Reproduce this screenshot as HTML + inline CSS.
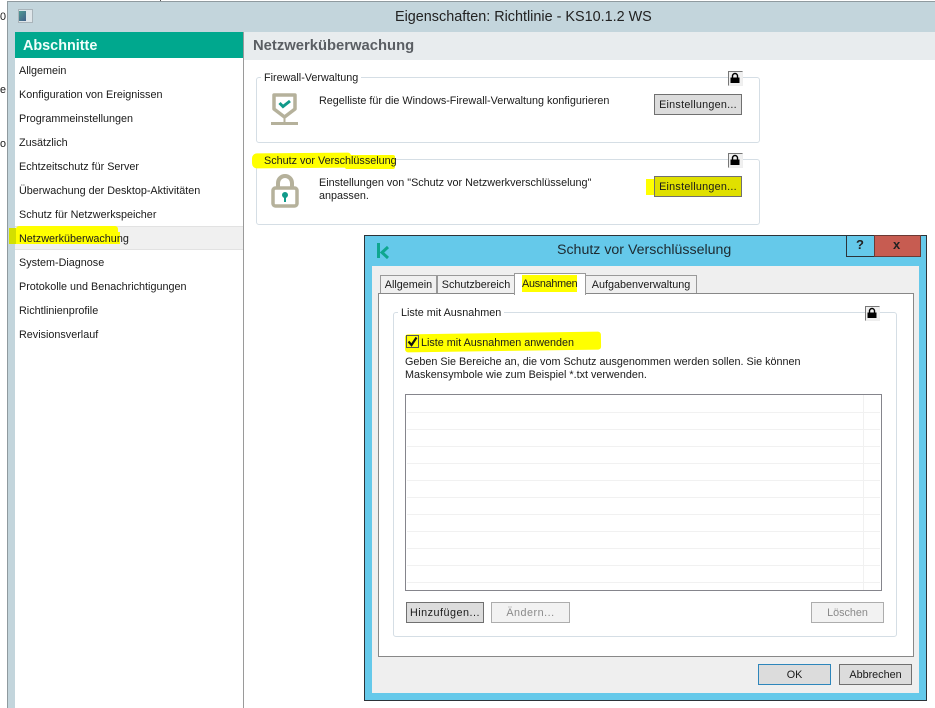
<!DOCTYPE html>
<html lang="de"><head><meta charset="utf-8"><title>Eigenschaften</title>
<style>
html,body{margin:0;padding:0;background:#fff}
#r{position:relative;width:935px;height:708px;overflow:hidden;background:#fff;font-family:"Liberation Sans",sans-serif;font-size:10.8px;color:#1a1a1a}
#r div,#r span,#r svg{position:absolute;box-sizing:border-box}
.t{white-space:nowrap;line-height:14px;margin-top:1px}
.h{margin-top:0}
.y{background:#ffff00}
.g{border:1px solid #d5dee5;border-radius:3px}
.b{background:#dcdcdc;border:1px solid #707070;text-align:center;line-height:21px;white-space:nowrap}
.w{letter-spacing:.25px}
.d{background:#f2f2f2;border:1px solid #adadad;color:#8a8a8a;text-align:center;line-height:21px}
.l{width:15px;height:15px;background:#f0f0f0;border:1px solid;border-color:#777 #eee #eee #777}
.tab{background:#f0f0f0;border:1px solid #999;border-bottom:0;text-align:center;line-height:19px;white-space:nowrap}
.row{left:1px;right:1px;height:1px;background:#f1f1f1}
</style></head><body><div id="r">

<div class="t" style="left:0;top:9px">0</div>
<div class="t" style="left:0;top:82px">e</div>
<div class="t" style="left:0;top:136px">o</div>
<div style="left:160px;top:0;width:1px;height:2px;background:#555"></div>

<!-- main window -->
<div style="left:7px;top:1px;width:928px;height:707px;background:#c3d5dc;border:1px solid #8f9a9f;border-right:0;border-bottom:0"></div>
<div style="left:18px;top:9px;width:15px;height:14px;background:#dfe6ea;border:1px solid #a9b4ba"></div>
<div style="left:19px;top:11px;width:7px;height:10px;background:linear-gradient(135deg,#4f9a93,#44608a)"></div>
<div class="t h" style="left:395px;top:8px;font-size:14.4px;line-height:18px;color:#222">Eigenschaften: Richtlinie - KS10.1.2 WS</div>

<!-- sidebar -->
<div style="left:15px;top:32px;width:229px;height:676px;background:#fff;border-right:1px solid #9a9a9a"></div>
<div style="left:15px;top:32px;width:228px;height:26px;background:#00a88e"></div>
<div class="t h" style="left:23px;top:38px;font-size:14.4px;line-height:16px;font-weight:bold;color:#f2fffb">Abschnitte</div>
<div style="left:15px;top:226px;width:228px;height:24px;background:#f0f0f0;border-top:1px solid #e2e2e2;border-bottom:1px solid #e2e2e2"></div>
<div class="y" style="left:9px;top:228px;width:7px;height:16px;background:#d3df00"></div>
<div class="y" style="left:16px;top:226px;width:102px;height:8px;border-radius:3px 3px 0 0"></div>
<div class="y" style="left:16px;top:232px;width:104px;height:12px"></div>
<div class="t" style="left:19px;top:63px">Allgemein</div>
<div class="t" style="left:19px;top:87px">Konfiguration von Ereignissen</div>
<div class="t" style="left:19px;top:111px">Programmeinstellungen</div>
<div class="t" style="left:19px;top:135px">Zusätzlich</div>
<div class="t" style="left:19px;top:159px">Echtzeitschutz für Server</div>
<div class="t" style="left:19px;top:183px">Überwachung der Desktop-Aktivitäten</div>
<div class="t" style="left:19px;top:207px">Schutz für Netzwerkspeicher</div>
<div class="t" style="left:19px;top:231px">Netzwerküberwachung</div>
<div class="t" style="left:19px;top:255px">System-Diagnose</div>
<div class="t" style="left:19px;top:279px">Protokolle und Benachrichtigungen</div>
<div class="t" style="left:19px;top:303px">Richtlinienprofile</div>
<div class="t" style="left:19px;top:327px">Revisionsverlauf</div>

<!-- right panel -->
<div style="left:244px;top:32px;width:691px;height:676px;background:#fff"></div>
<div style="left:244px;top:32px;width:691px;height:28px;background:#e8ecee"></div>
<div class="t h" style="left:253px;top:38px;font-size:14.8px;line-height:16px;font-weight:bold;color:#5a5e63">Netzwerküberwachung</div>

<div class="g" style="left:256px;top:77px;width:504px;height:66px"></div>
<div class="t" style="left:261px;top:70px;padding:0 3px;background:#fff">Firewall-Verwaltung</div>
<div class="l" style="left:728px;top:71px"></div>
<svg style="left:729px;top:72px" width="12" height="12" viewBox="0 0 12 12"><path d="M3.500 6V4a2.500 2.500 0 0 1 5 0V6" fill="none" stroke="#000" stroke-width="1.400"/><rect x="1.500" y="5.500" width="9" height="5.500" fill="#000"/></svg>
<svg style="left:270px;top:92px" width="30" height="34" viewBox="0 0 30 34"><path d="M4 3h21v14l-10.500 8L4 17z" fill="#fff" stroke="#b5b19b" stroke-width="3.500" stroke-linejoin="round"/><path d="M9.500 11l3.500 3.500 7-5.500" fill="none" stroke="#119a8a" stroke-width="3"/><path d="M14.500 26v4" stroke="#b5b19b" stroke-width="2"/><rect x="1" y="30" width="27" height="3" fill="#b5b19b"/></svg>
<div class="t" style="left:319px;top:93px">Regelliste für die Windows-Firewall-Verwaltung konfigurieren</div>
<div class="b w" style="left:654px;top:94px;width:88px;height:21px">Einstellungen...</div>

<div class="g" style="left:256px;top:159px;width:504px;height:66px"></div>
<div class="y" style="left:252px;top:153px;width:99px;height:15px;border-radius:5px 3px 3px 5px;transform:rotate(-.5deg)"></div>
<div class="y" style="left:345px;top:155px;width:50px;height:14px;border-radius:2px"></div>
<div class="t" style="left:264px;top:153px">Schutz vor Verschlüsselung</div>
<div class="l" style="left:728px;top:153px"></div>
<svg style="left:729px;top:154px" width="12" height="12" viewBox="0 0 12 12"><path d="M3.500 6V4a2.500 2.500 0 0 1 5 0V6" fill="none" stroke="#000" stroke-width="1.400"/><rect x="1.500" y="5.500" width="9" height="5.500" fill="#000"/></svg>
<svg style="left:271px;top:174px" width="28" height="34" viewBox="0 0 28 34"><path d="M7 14V9a7 7 0 0 1 14 0v5" fill="none" stroke="#b5b19b" stroke-width="4"/><rect x="2" y="14" width="24" height="18" rx="2.500" fill="#fff" stroke="#b5b19b" stroke-width="3.500"/><circle cx="14" cy="21" r="3" fill="#119a8a"/><rect x="13" y="22" width="2" height="6" fill="#119a8a"/></svg>
<div class="t" style="left:319px;top:175px">Einstellungen von "Schutz vor Netzwerkverschlüsselung"</div>
<div class="t" style="left:319px;top:188px">anpassen.</div>
<div class="b w" style="left:654px;top:176px;width:88px;height:21px;background:#e0e000">Einstellungen...</div>
<div class="y" style="left:646px;top:179px;width:8px;height:16px"></div>

<!-- dialog -->
<div style="left:364px;top:235px;width:563px;height:466px;background:#65c9ea;border:1px solid #2c3338"></div>
<div style="left:372px;top:266px;width:547px;height:427px;background:#efefef"></div>
<svg style="left:376px;top:242px" width="14" height="17" viewBox="0 0 14 17"><path d="M2.500 1v15" stroke="#0fa68f" stroke-width="3"/><path d="M12 5L6 10.500 12 16" fill="none" stroke="#0fa68f" stroke-width="3"/></svg>
<div class="t h" style="left:557px;top:241px;font-size:14.200px;line-height:18px;color:#1d2a30">Schutz vor Verschlüsselung</div>
<div style="left:846px;top:235px;width:29px;height:22px;border:1px solid #2c3338"></div>
<div style="left:874px;top:235px;width:47px;height:22px;background:#c75c51;border:1px solid #6b3a35"></div>
<div class="t h" style="left:856px;top:238px;font-weight:bold;font-size:13px;color:#222">?</div>
<div class="t h" style="left:893px;top:238px;font-weight:bold;font-size:13px;color:#222">x</div>

<div class="tab" style="left:380px;top:275px;width:57px;height:19px">Allgemein</div>
<div class="tab" style="left:437px;top:275px;width:78px;height:19px">Schutzbereich</div>
<div class="tab" style="left:585px;top:275px;width:112px;height:19px">Aufgabenverwaltung</div>
<div style="left:378px;top:293px;width:536px;height:364px;background:#fff;border:1px solid #888"></div>
<div style="left:514px;top:273px;width:72px;height:22px;background:#fff;border:1px solid #999;border-bottom:0"></div>
<div class="y" style="left:522px;top:275px;width:55px;height:17px"></div>
<div class="t" style="left:522px;top:276px;letter-spacing:-.25px">Ausnahmen</div>

<div class="g" style="left:393px;top:312px;width:504px;height:325px"></div>
<div class="t" style="left:398px;top:305px;padding:0 3px;background:#fff">Liste mit Ausnahmen</div>
<div class="l" style="left:865px;top:306px"></div>
<svg style="left:866px;top:307px" width="12" height="12" viewBox="0 0 12 12"><path d="M3.500 6V4a2.500 2.500 0 0 1 5 0V6" fill="none" stroke="#000" stroke-width="1.400"/><rect x="1.500" y="5.500" width="9" height="5.500" fill="#000"/></svg>
<div class="y" style="left:405px;top:333px;width:196px;height:18px;border-radius:3px;transform:rotate(-.8deg)"></div>
<div style="left:406px;top:335px;width:13px;height:13px;border:1px solid #555"></div>
<svg style="left:406px;top:335px" width="13" height="13" viewBox="0 0 13 13"><path d="M2.500 6.500l3 3.500 5-7.500" fill="none" stroke="#111" stroke-width="2.200"/></svg>
<div class="t" style="left:421px;top:335px">Liste mit Ausnahmen anwenden</div>
<div class="t" style="left:405px;top:354px">Geben Sie Bereiche an, die vom Schutz ausgenommen werden sollen. Sie können</div>
<div class="t" style="left:405px;top:367px">Maskensymbole wie zum Beispiel *.txt verwenden.</div>

<div style="left:405px;top:394px;width:477px;height:197px;background:#fff;border:1px solid #85858c">
<div class="row" style="top:17px"></div><div class="row" style="top:34px"></div><div class="row" style="top:51px"></div><div class="row" style="top:68px"></div><div class="row" style="top:85px"></div><div class="row" style="top:102px"></div><div class="row" style="top:119px"></div><div class="row" style="top:136px"></div><div class="row" style="top:153px"></div><div class="row" style="top:170px"></div><div class="row" style="top:187px"></div>
<div style="left:457px;top:0;width:1px;height:195px;background:#f1f1f1"></div>
</div>

<div class="b" style="left:406px;top:602px;width:78px;height:21px;letter-spacing:.5px">Hinzufügen...</div>
<div class="d" style="left:491px;top:602px;width:79px;height:21px;letter-spacing:.5px">Ändern...</div>
<div class="d" style="left:811px;top:602px;width:73px;height:21px">Löschen</div>
<div class="b" style="left:758px;top:664px;width:73px;height:21px;border-color:#2e86bb">OK</div>
<div class="b" style="left:839px;top:664px;width:73px;height:21px">Abbrechen</div>

</div></body></html>
